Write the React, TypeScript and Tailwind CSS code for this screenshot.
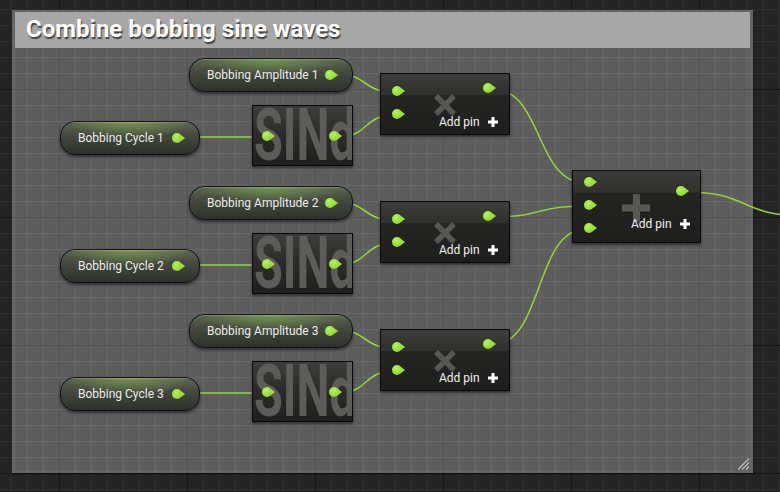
import React from 'react';

const GREEN = '#9ae33c';

// background grid of the graph editor, drawn in canvas coordinates
function Grid({ ox, oy, w, h, minor, major }: { ox: number; oy: number; w: number; h: number; minor: string; major: string }) {
  const vx: number[] = [];
  for (let x = 11; x < 780; x += 16) vx.push(x);
  const hy: number[] = [];
  for (let y = 9; y < 492; y += 16) hy.push(y);
  return (
    <svg className="absolute inset-0 pointer-events-none" width={w} height={h}>
      {vx.map((x) => (
        <line key={'v' + x} x1={x - ox + 0.5} y1={0} x2={x - ox + 0.5} y2={h} stroke={(x - 59) % 128 === 0 ? major : minor} strokeWidth={1} />
      ))}
      {hy.map((y) => (
        <line key={'h' + y} x1={0} y1={y - oy + 0.5} x2={w} y2={y - oy + 0.5} stroke={(y - 89) % 128 === 0 ? major : minor} strokeWidth={1} />
      ))}
    </svg>
  );
}

function Pin() {
  return (
    <div className="flex items-center shrink-0">
      <div className="w-[10px] h-[10px] rounded-full bg-[radial-gradient(circle_at_40%_35%,#b4f55a,#8fd934_70%)]" />
      <svg width="4" height="6" className="-ml-[1px]">
        <polygon points="0,0 4,3 0,6" fill={GREEN} />
      </svg>
    </div>
  );
}

function VarNode({ className, label }: { className: string; label: string }) {
  return (
    <div
      className={`absolute h-[34px] rounded-[15px] border border-[#111] shadow-[0_2px_3px_rgba(0,0,0,0.5)] bg-[linear-gradient(180deg,#5b6650_0%,#444a3e_40%,#2e312b_100%)] overflow-hidden ${className}`}
    >
      <div className="absolute inset-0 bg-[radial-gradient(ellipse_60%_70%_at_50%_0%,rgba(150,210,90,0.45),transparent_75%)]" />
      <div className="absolute inset-x-[6px] top-0 h-px bg-[rgba(255,255,255,0.18)]" />
      <div className="relative h-full flex items-center justify-between pl-[17px] pr-[14px]">
        <span className="text-[12px] leading-[16px] text-[#ececec] font-['Roboto',sans-serif] whitespace-nowrap">{label}</span>
        <Pin />
      </div>
    </div>
  );
}

function SinNode({ className }: { className: string }) {
  return (
    <div
      className={`absolute w-[101px] h-[61px] border border-[#0a0a0a] shadow-[0_2px_3px_rgba(0,0,0,0.5)] bg-[linear-gradient(180deg,#3d3e3b_0%,#2c2d2a_45%,#1f201e_100%)] overflow-hidden ${className}`}
    >
      <span className="absolute left-[1px] top-[-6px] origin-left scale-x-[0.65] text-[72px] leading-[72px] font-bold text-[#5c5d5b] font-['Roboto',sans-serif] whitespace-nowrap">
        SINd
      </span>
      <div className="relative h-full flex items-center justify-between pl-[9px] pr-[10px]">
        <Pin />
        <Pin />
      </div>
    </div>
  );
}

function AddPin({ className }: { className: string }) {
  return (
    <div className={`absolute flex items-center gap-[8px] ${className}`}>
      <span className="text-[12px] leading-[14px] text-[#f0f0f0] font-['Roboto',sans-serif]">Add pin</span>
      <svg width="10" height="10">
        <rect x="3.5" y="0" width="3" height="10" fill="#fff" />
        <rect x="0" y="3.5" width="10" height="3" fill="#fff" />
      </svg>
    </div>
  );
}

function MulNode({ className }: { className: string }) {
  return (
    <div
      className={`absolute w-[130px] h-[62px] border border-[#0a0a0a] shadow-[0_2px_3px_rgba(0,0,0,0.5)] bg-[linear-gradient(180deg,#3c3d3a_0%,#30312e_35%,#242522_36%,#1e1f1d_100%)] ${className}`}
    >
      <svg className="absolute left-[52px] top-[19px]" width="24" height="24">
        <line x1="3" y1="3" x2="21" y2="21" stroke="#575856" strokeWidth="5.5" />
        <line x1="21" y1="3" x2="3" y2="21" stroke="#575856" strokeWidth="5.5" />
      </svg>
      <div className="relative flex justify-between pl-[11px] pr-[13px]">
        <div className="flex flex-col gap-[13px] pt-[12px]">
          <Pin />
          <Pin />
        </div>
        <div className="pt-[9px]">
          <Pin />
        </div>
      </div>
      <AddPin className="left-[58px] top-[41px]" />
    </div>
  );
}

function SumNode({ className }: { className: string }) {
  return (
    <div
      className={`absolute w-[129px] h-[73px] border border-[#0a0a0a] shadow-[0_2px_3px_rgba(0,0,0,0.5)] bg-[linear-gradient(180deg,#3c3d3a_0%,#30312e_30%,#242522_31%,#1e1f1d_100%)] ${className}`}
    >
      <svg className="absolute left-[49px] top-[23px]" width="28" height="28">
        <rect x="11" y="0" width="7" height="28" fill="#575856" />
        <rect x="0" y="10.5" width="28" height="7" fill="#575856" />
      </svg>
      <div className="relative flex justify-between pl-[11px] pr-[11px]">
        <div className="flex flex-col gap-[13px] pt-[6px]">
          <Pin />
          <Pin />
          <Pin />
        </div>
        <div className="pt-[15px]">
          <Pin />
        </div>
      </div>
      <AddPin className="left-[58px] top-[46px]" />
    </div>
  );
}

function wire(x1: number, y1: number, x2: number, y2: number) {
  const d = Math.max(25, Math.abs(x2 - x1) * 0.55);
  return `M ${x1} ${y1} C ${x1 + d} ${y1}, ${x2 - d} ${y2}, ${x2} ${y2}`;
}

function Wires() {
  const paths: string[] = [];
  [0, 128, 256].forEach((o) => {
    paths.push(wire(336, 74 + o, 394, 92 + o));
    paths.push(wire(180, 137 + o, 264, 137 + o));
    paths.push(wire(338, 137 + o, 394, 115 + o));
  });
  paths.push(wire(492, 89, 586, 183));
  paths.push(wire(492, 217, 586, 206));
  paths.push(wire(492, 345, 586, 229));
  paths.push(wire(685, 192, 805, 216));
  return (
    <svg className="absolute inset-0 pointer-events-none" width="780" height="492">
      {paths.map((d, i) => (
        <path key={i} d={d} fill="none" stroke="#8ed43a" strokeWidth="1.6" />
      ))}
    </svg>
  );
}

const rows = [
  { n: 1, top: 'top-[0px]' },
  { n: 2, top: 'top-[128px]' },
  { n: 3, top: 'top-[256px]' },
];

export default function App() {
  return (
    <div className="relative w-[780px] h-[492px] overflow-hidden bg-[#242424]">
      <Grid ox={0} oy={0} w={780} h={492} minor="#2f2f2f" major="#171717" />

      {/* comment box */}
      <div className="absolute left-[12px] top-[10px] w-[741px] h-[463px] bg-[#5d5d5d] shadow-[0_1px_2px_rgba(0,0,0,0.6)] overflow-hidden">
        <Grid ox={12} oy={10} w={741} h={463} minor="#686868" major="#525252" />
        <div className="absolute inset-0 border-[3px] border-[rgba(255,255,255,0.05)]" />
        <div className="absolute left-[3px] top-[2px] w-[735px] h-[36px] bg-[#a7a7a7] flex items-center pl-[11px]">
          <span className="text-[24px] font-bold text-white font-['Roboto',sans-serif] [text-shadow:1px_2px_1px_#404040] leading-none pb-[2px]">
            Combine bobbing sine waves
          </span>
        </div>
        <svg className="absolute right-[3px] bottom-[3px]" width="13" height="12">
          <line x1="1" y1="11.5" x2="12" y2="0.5" stroke="#bdbdbd" strokeWidth="1.2" />
          <line x1="5" y1="11.5" x2="12" y2="4.5" stroke="#bdbdbd" strokeWidth="1.2" />
          <line x1="9" y1="11.5" x2="12" y2="8.5" stroke="#bdbdbd" strokeWidth="1.2" />
        </svg>
      </div>

      <Wires />

      {rows.map((r) => (
        <div key={r.n} className={`absolute left-0 w-[780px] h-0 ${r.top}`}>
          <VarNode className="left-[189px] top-[58px] w-[164px]" label={`Bobbing Amplitude ${r.n}`} />
          <VarNode className="left-[60px] top-[121px] w-[140px]" label={`Bobbing Cycle ${r.n}`} />
          <SinNode className="left-[252px] top-[105px]" />
          <MulNode className="left-[380px] top-[73px]" />
        </div>
      ))}

      <SumNode className="left-[572px] top-[170px]" />
    </div>
  );
}
